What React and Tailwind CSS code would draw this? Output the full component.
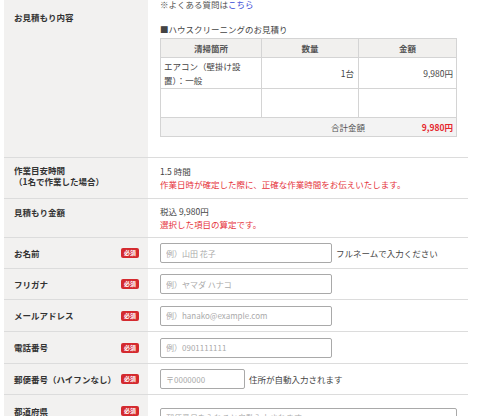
import React from "react";

const font = { fontFamily: '"Noto Sans CJK JP", "Noto Sans", sans-serif' };

function Badge() {
  return (
    <span className="inline-flex items-center justify-center w-[18px] h-[10px] rounded-[2px] bg-[#d42a2f] text-white text-[6px] font-bold leading-none">
      必須
    </span>
  );
}

function FormRow({ label, h, children, required = true }) {
  return (
    <div className={`flex border-b border-[#dcdcdc] ${h}`}>
      <div className="w-[144px] shrink-0 bg-[#f2f1f0] flex items-center justify-between pl-[10px] pr-[9px]">
        <span className="text-[8.5px] font-bold text-[#333]">{label}</span>
        {required && <Badge />}
      </div>
      <div className="flex-1 flex items-center pl-[12px] text-[8.5px] text-[#444]">{children}</div>
    </div>
  );
}

function Input({ placeholder, w = "w-[172px]" }) {
  return (
    <input
      readOnly
      placeholder={placeholder}
      className={`${w} h-[20px] border border-[#a9a9a9] rounded-[2px] px-[5px] text-[8px] placeholder:text-[#aaa] outline-none bg-white`}
      style={font}
    />
  );
}

export default function App() {
  return (
    <div className="w-[500px] h-[416px] overflow-hidden bg-white text-[#333]" style={font}>
      <div className="ml-[4px] w-[464px]">
        {/* estimate contents */}
        <div className="flex border-b border-[#dcdcdc] h-[158px]">
          <div className="w-[144px] shrink-0 bg-[#f2f1f0] pl-[10px] pt-[2px]">
            <span className="text-[8.5px] font-bold leading-[12px]">お見積もり内容</span>
          </div>
          <div className="flex-1 pl-[12px] text-[8.5px] text-[#444]">
            <div className="-mt-[2px] leading-[12px] text-[#555]">
              ※よくある質問は<span className="text-[#3a49d6]">こちら</span>
            </div>
            <div className="mt-[13px] leading-[12px]">■ハウスクリーニングのお見積り</div>
            <div className="mt-[3px] w-[297px] border border-[#d4d4d4]">
              <div className="grid grid-cols-[101px_97px_1fr] h-[19px] bg-[#f1f0ee] border-b border-[#d4d4d4] font-bold text-[#555]">
                <div className="flex items-center justify-center border-r border-[#d4d4d4]">清掃箇所</div>
                <div className="flex items-center justify-center border-r border-[#d4d4d4]">数量</div>
                <div className="flex items-center justify-center">金額</div>
              </div>
              <div className="grid grid-cols-[101px_97px_1fr] h-[31px] border-b border-[#d4d4d4]">
                <div className="flex items-center px-[3px] leading-[14px] border-r border-[#d4d4d4]">
                  エアコン（壁掛け設
                  <br />
                  置）：一般
                </div>
                <div className="flex items-center justify-end pr-[4px] border-r border-[#d4d4d4]">1台</div>
                <div className="flex items-center justify-end pr-[3px]">9,980円</div>
              </div>
              <div className="grid grid-cols-[101px_97px_1fr] h-[29px] border-b border-[#d4d4d4]">
                <div className="border-r border-[#d4d4d4]" />
                <div className="border-r border-[#d4d4d4]" />
                <div />
              </div>
              <div className="flex items-center justify-end h-[18px] bg-[#f3f3f3] pr-[3px] text-[#555]">
                <span>合計金額</span>
                <span className="w-[88px] text-right font-bold text-[#e5262d]">9,980円</span>
              </div>
            </div>
          </div>
        </div>

        {/* work time */}
        <div className="flex border-b border-[#dcdcdc] h-[41px]">
          <div className="w-[144px] shrink-0 bg-[#f2f1f0] pl-[10px] pt-[7px] text-[8.5px] font-bold leading-[11px]">
            <div>作業目安時間</div>
            <div>（1名で作業した場合）</div>
          </div>
          <div className="flex-1 pl-[12px] pt-[7px] text-[8.5px] leading-[13px]">
            <div className="text-[#444]">1.5 時間</div>
            <div className="text-[#e5323a]">作業日時が確定した際に、正確な作業時間をお伝えいたします。</div>
          </div>
        </div>

        {/* estimate price */}
        <div className="flex border-b border-[#dcdcdc] h-[39px]">
          <div className="w-[144px] shrink-0 bg-[#f2f1f0] pl-[10px] pt-[7px] text-[8.5px] font-bold leading-[12px]">
            見積もり金額
          </div>
          <div className="flex-1 pl-[12px] pt-[6px] text-[8.5px] leading-[13px]">
            <div className="text-[#444]">税込 9,980円</div>
            <div className="text-[#e5323a]">選択した項目の算定です。</div>
          </div>
        </div>

        <FormRow label="お名前" h="h-[31px]">
          <Input placeholder="例）山田 花子" />
          <span className="ml-[4px]">フルネームで入力ください</span>
        </FormRow>
        <FormRow label="フリガナ" h="h-[31px]">
          <Input placeholder="例）ヤマダ ハナコ" />
        </FormRow>
        <FormRow label="メールアドレス" h="h-[32px]">
          <Input placeholder="例）hanako@example.com" />
        </FormRow>
        <FormRow label="電話番号" h="h-[32px]">
          <Input placeholder="例）0901111111" />
        </FormRow>
        <FormRow label="郵便番号（ハイフンなし）" h="h-[31px]">
          <Input placeholder="〒0000000" w="w-[85px]" />
          <span className="ml-[4px]">住所が自動入力されます</span>
        </FormRow>
        <div className="flex h-[40px]">
          <div className="w-[144px] shrink-0 bg-[#f2f1f0] flex items-start justify-between pl-[10px] pr-[9px] pt-[11px]">
            <span className="text-[8.5px] font-bold text-[#333] leading-[10px]">都道府県</span>
            <Badge />
          </div>
          <div className="flex-1 pl-[12px] pt-[7px]">
            <Input placeholder="郵便番号を入れると自動入力されます" w="w-[297px]" />
          </div>
        </div>
      </div>
    </div>
  );
}
